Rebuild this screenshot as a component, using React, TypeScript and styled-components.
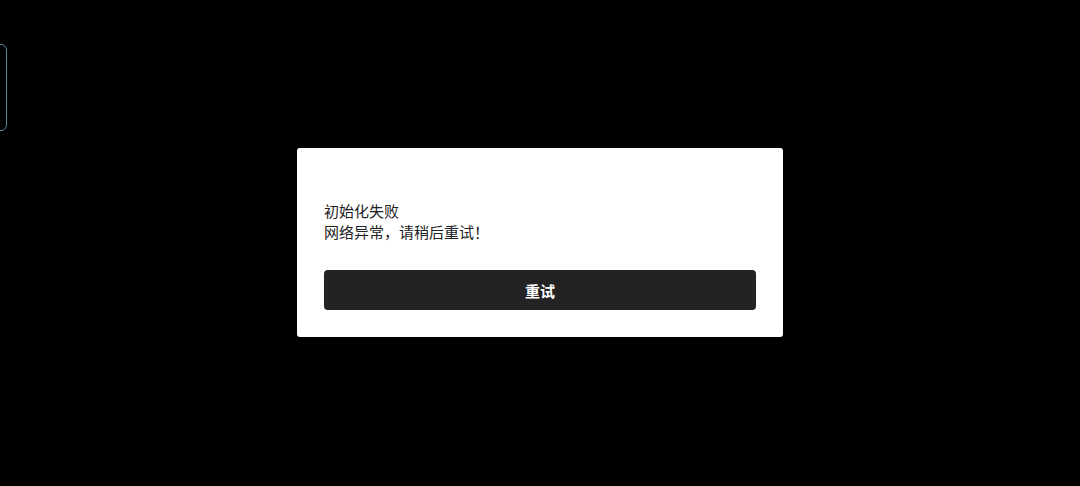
import React from 'react';
import styled, { createGlobalStyle } from 'styled-components';

const GlobalStyle = createGlobalStyle`
  html, body {
    margin: 0;
    padding: 0;
    background: #000;
  }
  body {
    font-family: "Noto Sans CJK SC", "Noto Sans", sans-serif;
  }
`;

const Screen = styled.div`
  position: relative;
  width: 100vw;
  height: 100vh;
  background: #000;
  display: flex;
  align-items: center;
  justify-content: center;
  overflow: hidden;
`;

// floating side tab peeking from the left edge
const SideTab = styled.div`
  position: absolute;
  top: 44px;
  left: -12px;
  width: 17px;
  height: 85px;
  border: 1px solid #52899a;
  border-radius: 6px;
`;

const Dialog = styled.div`
  width: 486px;
  box-sizing: border-box;
  padding: 52px 27px 27px;
  margin-bottom: 1px;
  background: #fff;
  border-radius: 3px;
  display: flex;
  flex-direction: column;
`;

const Message = styled.div`
  font-size: 15px;
  line-height: 21px;
  color: #222;
`;

const RetryButton = styled.button`
  margin-top: 28px;
  height: 40px;
  border: none;
  border-radius: 4px;
  background: #232323;
  color: #fff;
  font-family: "Noto Sans CJK SC", "Noto Sans", sans-serif;
  font-size: 15px;
  font-weight: 700;
  cursor: pointer;
`;

const App = () => {
  return (
    <>
      <GlobalStyle />
      <Screen>
        <SideTab />
        <Dialog>
          <Message>
            初始化失败
            <br />
            网络异常，请稍后重试！
          </Message>
          <RetryButton>重试</RetryButton>
        </Dialog>
      </Screen>
    </>
  );
};

export default App;
